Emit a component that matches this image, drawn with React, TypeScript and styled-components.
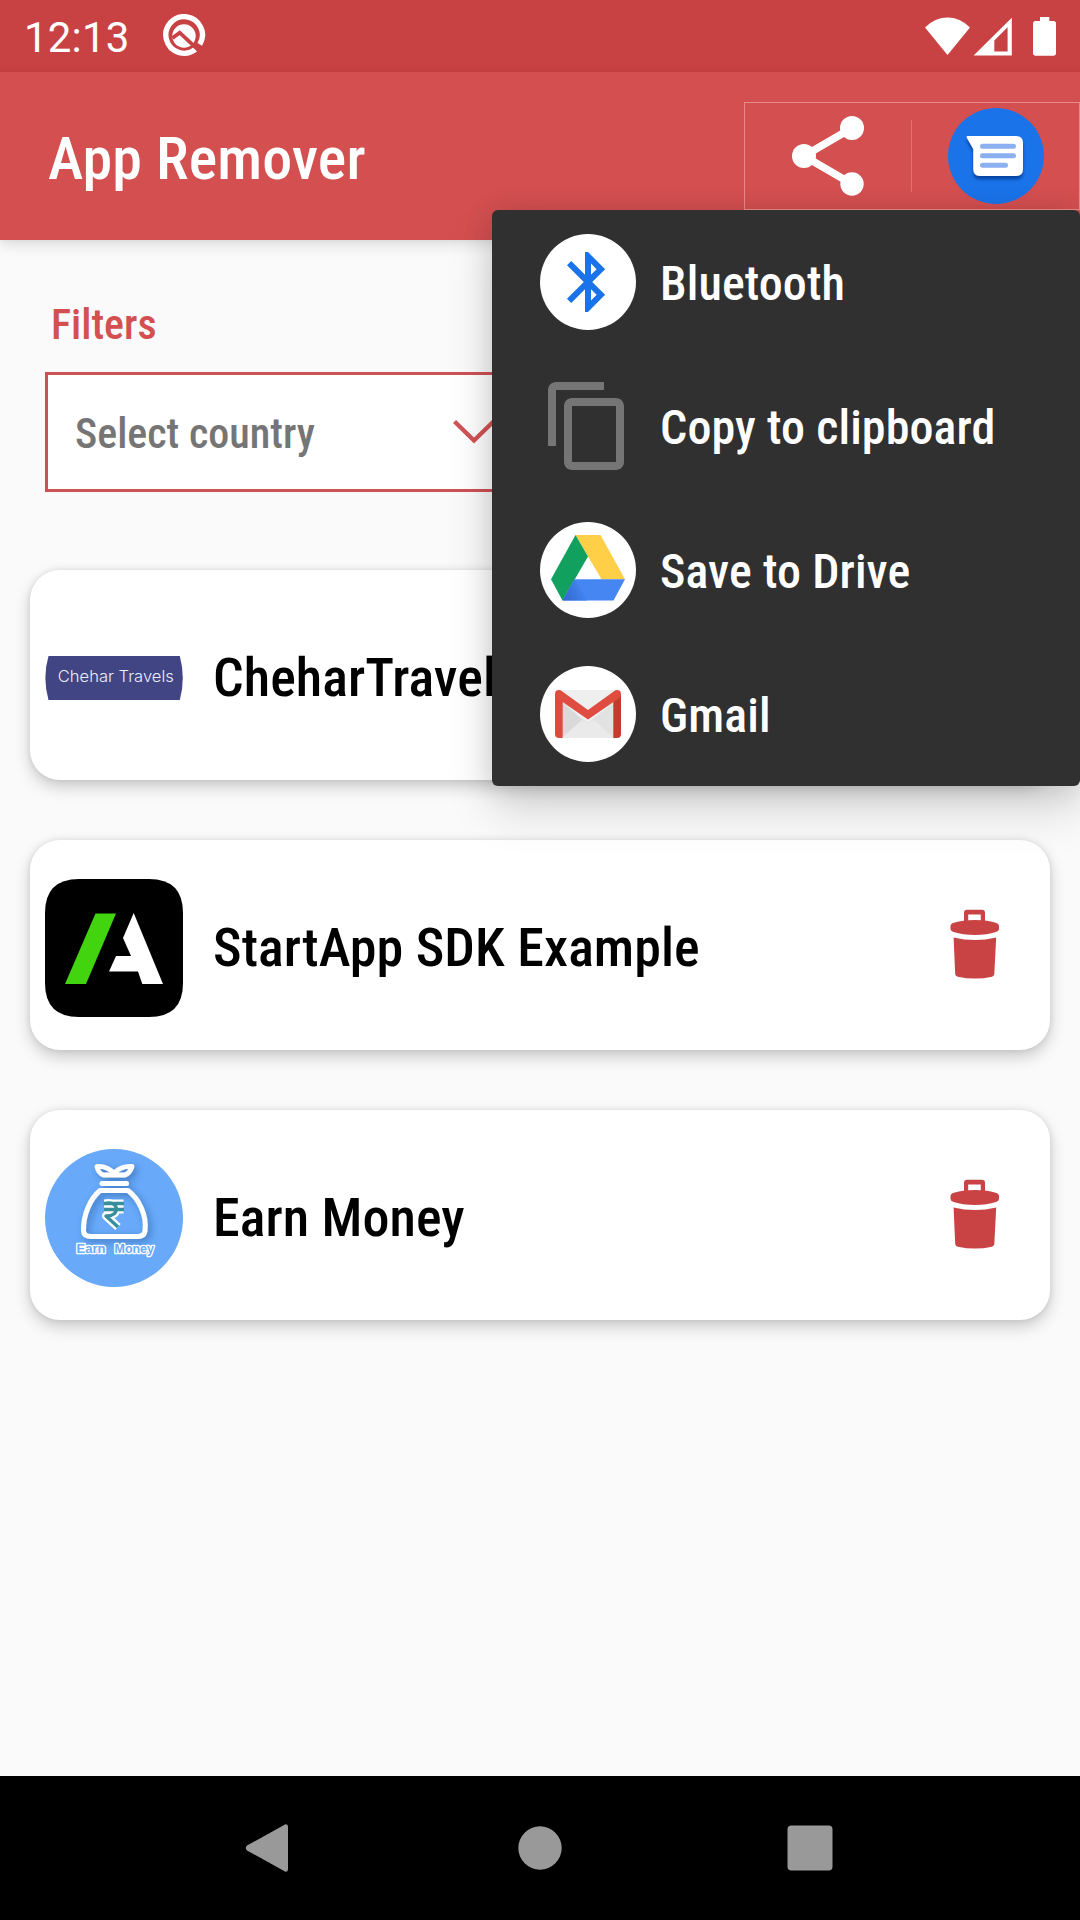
import React from "react";
import styled, { createGlobalStyle } from "styled-components";

const GlobalStyle = createGlobalStyle`
  *, *::before, *::after { box-sizing: border-box; }
  body { margin: 0; background: #fafafa; }
  svg { display: block; flex: none; }
`;

const Screen = styled.div`
  position: relative;
  width: 1080px;
  height: 1920px;
  overflow: hidden;
  display: flex;
  flex-direction: column;
  background: #fafafa;
  font-family: "Roboto Condensed", Roboto, sans-serif;
  font-stretch: 75%;
  font-weight: 500;
`;

const StatusBar = styled.header`
  height: 72px;
  flex: none;
  display: flex;
  align-items: center;
  padding: 0 23px 0 24px;
  background: #c94243;
`;

const Clock = styled.span`
  font: 400 42px/72px Roboto, sans-serif;
  font-stretch: 100%;
  letter-spacing: 0.2px;
  color: #fff;
  width: 138px;
  padding-top: 4px;
`;

const StatusIcons = styled.div`
  margin-left: auto;
  display: flex;
`;

const AppBar = styled.div`
  height: 168px;
  flex: none;
  display: flex;
  justify-content: space-between;
  align-items: flex-start;
  padding: 30px 0 0 48px;
  background: #d34f50;
  box-shadow: 0 6px 12px rgba(0, 0, 0, 0.1), 0 0 6px rgba(0, 0, 0, 0.06);
  z-index: 1;
`;

const Title = styled.h1`
  margin: 0;
  padding-top: 21px;
  font-size: 60px;
  line-height: 72px;
  font-weight: 500;
  letter-spacing: 0.1px;
  color: #fff;
`;

const ShareActions = styled.div`
  width: 336px;
  height: 108px;
  display: flex;
  align-items: center;
  border: 1px solid rgba(255, 200, 195, 0.5);
  padding: 0 35px;
`;

const ActionDivider = styled.i`
  width: 1px;
  height: 72px;
  margin: 0 36px 0 35px;
  background: rgba(255, 255, 255, 0.2);
`;

const Content = styled.main`
  flex: 1;
  padding: 55px 30px 0;
`;

const FilterLabel = styled.h2`
  margin: 0 0 0 21px;
  font-size: 42px;
  line-height: 60px;
  font-weight: 500;
  color: #d34f50;
`;

const CountrySelect = styled.div`
  width: 480px;
  height: 120px;
  margin: 17px 0 0 15px;
  padding: 4px 27px 0 27px;
  display: flex;
  align-items: center;
  justify-content: space-between;
  border: 3px solid #cc5254;
  background: #fff;
  font-size: 42px;
  line-height: 60px;
  color: #757575;
`;

const AppList = styled.section`
  margin-top: 78px;
  display: flex;
  flex-direction: column;
  gap: 60px;
`;

const Card = styled.article`
  height: 210px;
  padding: 6px 50px 0 15px;
  display: flex;
  align-items: center;
  border-radius: 30px;
  background: #fff;
  box-shadow: 0 7px 16px rgba(0, 0, 0, 0.19), 0 0 6px rgba(0, 0, 0, 0.1);
`;

const AppName = styled.span`
  flex: 1;
  margin-left: 30px;
  padding-bottom: 1px;
  font-size: 54px;
  line-height: 66px;
  letter-spacing: 0.05px;
  color: #000;
`;

const DeleteButton = styled.span`
  padding-bottom: 7px;
`;

const Menu = styled.nav`
  position: absolute;
  left: 492px;
  top: 210px;
  width: 588px;
  height: 576px;
  z-index: 2;
  border-radius: 6px;
  background: #303030;
  box-shadow: 0 24px 48px rgba(0, 0, 0, 0.14), 0 4px 30px rgba(0, 0, 0, 0.13);
`;

const MenuItem = styled.div`
  height: 144px;
  padding-left: 48px;
  display: flex;
  align-items: center;
  gap: 24px;
`;

const MenuLabel = styled.span`
  padding-top: 4px;
  font-size: 48px;
  line-height: 60px;
  letter-spacing: 0.1px;
  color: #fff;
`;

const NavBar = styled.footer`
  height: 144px;
  flex: none;
  display: flex;
  align-items: center;
  justify-content: center;
  gap: 174px;
  background: #000;
`;

const QLogo = () => (
  <svg width="44" height="44" viewBox="0 0 44 44">
    <path d="M33.6 35.2A18.3 18.3 0 1 1 37.8 30.4" fill="none" stroke="#fff" strokeWidth="5.4" />
    <circle cx="22" cy="22" r="11.7" fill="#fff" />
    <path d="M10.5 24L17.7 18.7L37 36.6" fill="none" stroke="#c94243" strokeWidth="3.8" />
  </svg>
);

const StatusGlyphs = () => (
  <svg width="134" height="42" viewBox="923 14 134 42" fill="#fff">
    <path d="M925 26.5Q935 16.6 947.5 16.6T970 26.5L947.5 54Z" />
    <path fillRule="evenodd" d="M973.6 54.4L1011.8 16.8V54.4ZM994.3 39.5V50.6H1007.6V26.3Z" />
    <path d="M1040 16H1049.3V20H1053.5Q1056 20 1056 22.5V52Q1056 54.7 1053.4 54.7H1035.6Q1033 54.7 1033 52V22.5Q1033 20 1035.5 20H1040Z" />
  </svg>
);

const ShareIcon = () => (
  <svg width="96" height="96" viewBox="0 0 96 96">
    <path d="M72 20L24 48L72 76" fill="none" stroke="#fff" strokeWidth="7.6" />
    <g fill="#fff">
      <circle cx="72" cy="20" r="12" />
      <circle cx="24" cy="48" r="12" />
      <circle cx="72" cy="76" r="11.7" />
    </g>
  </svg>
);

const MessagesIcon = () => (
  <svg width="96" height="96" viewBox="0 0 96 96">
    <defs>
      <filter id="bubble" x="-20%" y="-20%" width="140%" height="160%">
        <feDropShadow dx="0" dy="3.5" stdDeviation="1.8" floodColor="#003b94" floodOpacity="0.8" />
      </filter>
    </defs>
    <circle cx="48" cy="48" r="48" fill="#1a73e8" />
    <path filter="url(#bubble)" fill="#fff" d="M19.5 28H68Q75 28 75 35V61Q75 68 68 68H32Q25.3 68 25.3 61V41L18.8 29.8Q18 28 19.5 28Z" />
    <path d="M34.5 38.3H65.5M34.5 47.8H65.5M34.5 57.2H57.5" stroke="#8ab0f1" strokeWidth="5" strokeLinecap="round" />
  </svg>
);

const Chevron = () => (
  <svg width="42" height="30" viewBox="0 0 42 30">
    <path d="M1.5 2.5L21 21.5L40.5 2.5" fill="none" stroke="#d15356" strokeWidth="4.4" />
  </svg>
);

const BluetoothIcon = () => (
  <svg width="96" height="96" viewBox="0 0 96 96">
    <circle cx="48" cy="48" r="48" fill="#fff" />
    <path transform="translate(12 12) scale(3)" fill="#1a73e8" d="M17.71 7.71L12 2h-1v7.59L6.41 5 5 6.41 10.59 12 5 17.59 6.41 19 11 14.41V22h1l5.71-5.71-4.3-4.29 4.3-4.29zM13 5.83l1.88 1.88L13 9.59V5.83zm1.88 10.46L13 18.17v-3.76l1.88 1.88z" />
  </svg>
);

const CopyIcon = () => (
  <svg width="96" height="96" viewBox="0 0 24 24" fill="#757575">
    <path d="M16 1H4c-1.1 0-2 .9-2 2v14h2V3h12V1zm3 4H8c-1.1 0-2 .9-2 2v14c0 1.1.9 2 2 2h11c1.1 0 2-.9 2-2V7c0-1.1-.9-2-2-2zm0 16H8V7h11v14z" />
  </svg>
);

const DriveIcon = () => (
  <svg width="96" height="96" viewBox="0 0 96 96">
    <defs>
      <linearGradient id="driveFold" x1="0" y1="1" x2="1" y2="0.6">
        <stop offset="0" stopColor="#3166cb" />
        <stop offset="1" stopColor="#4586f3" />
      </linearGradient>
    </defs>
    <circle cx="48" cy="48" r="48" fill="#fff" />
    <path d="M35.5 13H60.5L85 57.2H61.5Z" fill="#ffcf48" />
    <path d="M35.5 13L48 34.5L22.5 78.5L11 57.2Z" fill="#11a05e" />
    <path d="M34.5 57.2H85L73.5 78.5H22.5Z" fill="#4586f3" />
    <path d="M34.5 57.2L47 78.5H22.5Z" fill="url(#driveFold)" />
  </svg>
);

const GmailIcon = () => (
  <svg width="96" height="96" viewBox="0 0 96 96">
    <circle cx="48" cy="48" r="48" fill="#fff" />
    <path d="M18 24H78V72H18Z" fill="#efefef" />
    <path d="M22 36L48 57L74 36V72H22Z" fill="#e2e2e2" />
    <path d="M22 72L42 54L48 58L54 54L74 72Z" fill="#eaeaea" />
    <path d="M22 36L42 54L22 71Z" fill="#d9d9d9" />
    <path d="M15 28V68Q15 72 19 72H22.7V34Z" fill="#dd4b3e" />
    <path d="M81 28V68Q81 72 77 72H73.3V34Z" fill="#c43b2e" />
    <path d="M15 28Q15 24 19 24Q20.5 24 22 25.3L48 44L74 25.3Q75.5 24 77 24Q81 24 81 28Q81 31 78.5 32.6L48 53.5L17.5 32.6Q15 31 15 28Z" fill="#df4d41" />
  </svg>
);

const CheharIcon = () => (
  <svg width="138" height="138" viewBox="0 0 138 138">
    <path d="M3.5 47H134.8Q140.8 69 134.8 91H3.5Q-2.8 69 3.5 47Z" fill="#424583" />
    <text x="12.8" y="73" textLength="116" lengthAdjust="spacingAndGlyphs" fill="#ececfa" fontFamily="Inter" fontSize="16" fontWeight="300">Chehar Travels</text>
  </svg>
);

const StartAppIcon = () => (
  <svg width="138" height="138" viewBox="0 0 138 138">
    <path d="M34 0H104Q138 0 138 34V104Q138 138 104 138H34Q0 138 0 104V34Q0 0 34 0Z" fill="#000" />
    <path d="M50.5 34.5H71L41 105H20Z" fill="#42d40e" />
    <path d="M88.7 34L118 105H97.3L93 92.5H64L71 77H86L78 59Z" fill="#fff" />
  </svg>
);

const EarnMoneyIcon = () => (
  <svg width="138" height="138" viewBox="0 0 138 138">
    <defs>
      <filter id="bagShadow" x="-20%" y="-20%" width="150%" height="150%">
        <feDropShadow dx="3" dy="3" stdDeviation="3.5" floodColor="#24528f" floodOpacity="0.55" />
      </filter>
    </defs>
    <circle cx="69" cy="69" r="69" fill="#68a9fa" />
    <g filter="url(#bagShadow)" fill="none" stroke="#fff" strokeLinejoin="round" strokeLinecap="round">
      <path d="M58.5 26Q53 24 52 17.5Q61 16.5 69 24Q77 16.5 87 17.5Q85 24 80 26Z" strokeWidth="4.800" />
      <path d="M57 34.5H81.5" strokeWidth="5" />
      <path d="M55 41.5H83C94 50 102 66 100 82Q99 87.5 93 87.5H46Q39 87.5 38.5 82C38 66 45 50 55 41.5Z" strokeWidth="5" />
    </g>
    <g fill="none" strokeLinejoin="round">
      <path d="M59 54.5H78.500M59 60.500H78.500M60 54.5C75 51 75 68 61 67L73 78" stroke="#fff" strokeWidth="8" />
      <path d="M58.500 54.5H79M59 60.500H79M60 54.5C75 51 75 68 61 67L73 78" stroke="#378f9b" strokeWidth="3.400" />
    </g>
    <g fontFamily="Liberation Sans" fontSize="12.5" fontWeight="700" fill="#68a9fa" stroke="#fff" strokeWidth="2.6" strokeLinejoin="round" paintOrder="stroke">
      <text x="31.5" y="103.500" textLength="29" lengthAdjust="spacingAndGlyphs">Earn</text>
      <text x="69.500" y="103.500" textLength="39.500" lengthAdjust="spacingAndGlyphs">Money</text>
    </g>
  </svg>
);

const TrashIcon = () => (
  <svg width="50" height="72" viewBox="0 0 50 72" fill="#c94345">
    <path fillRule="evenodd" d="M14 12V4Q14 .7 17 .7H32Q35 .7 35 4V12ZM18.2 5.5V12H30.8V5.5Z" />
    <path d="M.5 18Q0 15.5 3 14Q12 11 25 11T46.5 14Q49.5 15.5 49 18V20Q49 22 46 23Q37 26 25 26T3.5 23Q.5 22 .5 20Z" />
    <path d="M3.6 28.5Q25 33.5 46.2 28.5L44.3 65Q44 67 42 67.7Q25 71.5 7.8 67.7Q5.3 67 5.2 65Z" />
  </svg>
);

const apps = [
  { name: "CheharTravels", icon: <CheharIcon /> },
  { name: "StartApp SDK Example", icon: <StartAppIcon /> },
  { name: "Earn Money", icon: <EarnMoneyIcon /> },
];

const targets = [
  { name: "Bluetooth", icon: <BluetoothIcon /> },
  { name: "Copy to clipboard", icon: <CopyIcon /> },
  { name: "Save to Drive", icon: <DriveIcon /> },
  { name: "Gmail", icon: <GmailIcon /> },
];

export default function App() {
  return (
    <Screen>
      <GlobalStyle />
      <StatusBar>
        <Clock>12:13</Clock>
        <QLogo />
        <StatusIcons>
          <StatusGlyphs />
        </StatusIcons>
      </StatusBar>
      <AppBar>
        <Title>App Remover</Title>
        <ShareActions>
          <ShareIcon />
          <ActionDivider />
          <MessagesIcon />
        </ShareActions>
      </AppBar>
      <Content>
        <FilterLabel>Filters</FilterLabel>
        <CountrySelect>
          Select country
          <Chevron />
        </CountrySelect>
        <AppList>
          {apps.map((app) => (
            <Card key={app.name}>
              {app.icon}
              <AppName>{app.name}</AppName>
              <DeleteButton>
                <TrashIcon />
              </DeleteButton>
            </Card>
          ))}
        </AppList>
      </Content>
      <NavBar>
        <svg width="96" height="96" viewBox="0 0 96 96">
          <path d="M66 27V69Q66 72.5 63 71.5L25 50.5Q22.5 48 25 45.5L63 24.5Q66 23.5 66 27Z" fill="#999" />
        </svg>
        <svg width="96" height="96" viewBox="0 0 96 96">
          <circle cx="48" cy="48" r="21.7" fill="#999" />
        </svg>
        <svg width="96" height="96" viewBox="0 0 96 96">
          <rect x="25.5" y="25.5" width="45" height="45" rx="4" fill="#999" />
        </svg>
      </NavBar>
      <Menu>
        {targets.map((target) => (
          <MenuItem key={target.name}>
            {target.icon}
            <MenuLabel>{target.name}</MenuLabel>
          </MenuItem>
        ))}
      </Menu>
    </Screen>
  );
}
